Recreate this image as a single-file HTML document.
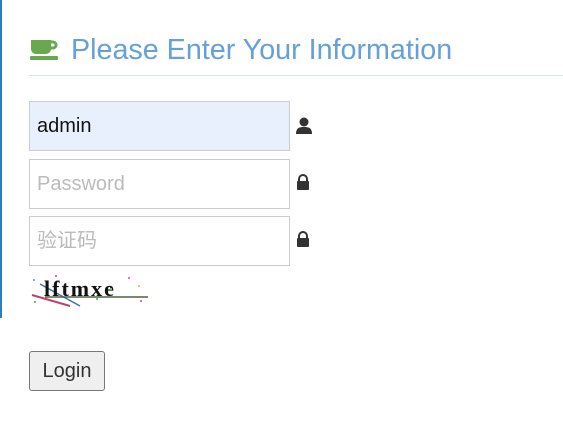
<!DOCTYPE html>
<html><head><style>
body{margin:0;width:563px;height:423px;background:#fff;position:relative;overflow:hidden;font-family:"Liberation Sans","Noto Sans CJK SC",sans-serif}
.bar{position:absolute;left:0;top:0;width:2px;height:318px;background:#2a7fc4}
h1{position:absolute;left:71px;top:34px;margin:0;font-weight:normal;font-size:28.7px;color:#66a0d8;white-space:nowrap}
.hr{position:absolute;left:29px;top:75px;width:534px;height:1px;background:#d6e4f0}
.in{position:absolute;left:29px;font-size:20px;line-height:48px;padding-left:7px;box-sizing:border-box;width:261px;height:50px;border:1px solid #ccc;color:#bbb}
.ic{position:absolute;left:296px}
.btn{position:absolute;left:29px;top:351px;width:76px;height:40px;box-sizing:border-box;border:1px solid #777;border-radius:3px;background:#efefef;font-size:20px;line-height:38px;text-align:center;color:#333}
</style></head><body>
<div class="bar"></div>
<svg style="position:absolute;left:30px;top:39px" width="30" height="24" viewBox="0 0 30 24"><path d="M1 1h20v9a5 5 0 0 1-5 5H6a5 5 0 0 1-5-5z" fill="#6aa84f"/><path d="M21 3h2a3 3 0 0 1 0 6h-2" fill="none" stroke="#6aa84f" stroke-width="3"/><rect x="0" y="17" width="28" height="4" rx="1" fill="#6aa84f"/></svg>
<h1>Please Enter Your Information</h1>
<div class="hr"></div>
<div class="in" style="top:101px;background:#e8f0fe;color:#111">admin</div>
<div class="in" style="top:159px">Password</div>
<div class="in" style="top:216px">验证码</div>
<svg class="ic" style="top:117px" width="16" height="18" viewBox="0 0 16 18"><circle cx="8" cy="5" r="4.5" fill="#333"/><path d="M0 17c0-6 3-7 8-7s8 1 8 7z" fill="#333"/></svg>
<svg class="ic" style="top:174px" width="14" height="16" viewBox="0 0 14 16"><path d="M3 7V5a4 4 0 0 1 8 0v2" fill="none" stroke="#333" stroke-width="2"/><rect x="1" y="7" width="12" height="9" rx="1" fill="#333"/></svg>
<svg class="ic" style="top:231px" width="14" height="16" viewBox="0 0 14 16"><path d="M3 7V5a4 4 0 0 1 8 0v2" fill="none" stroke="#333" stroke-width="2"/><rect x="1" y="7" width="12" height="9" rx="1" fill="#333"/></svg>
<svg style="position:absolute;left:30px;top:274px" width="120" height="34" viewBox="0 0 120 34"><path d="M2 21 L40 32" stroke="#c04070" stroke-width="2"/><path d="M10 10 L50 32" stroke="#4070b0" stroke-width="1.5"/><path d="M15 23 H118" stroke="#506040" stroke-width="1.5"/><text x="14" y="22" font-family="Liberation Serif,serif" font-weight="bold" font-size="22" letter-spacing="2" fill="#111">lftmxe</text><g fill="#8ad"><rect x="3" y="5" width="2" height="2"/><rect x="25" y="1" width="2" height="2" fill="#c6f"/><rect x="98" y="3" width="2" height="2" fill="#f6c"/><rect x="108" y="11" width="2" height="2" fill="#cc8"/><rect x="80" y="14" width="2" height="2" fill="#6c6"/><rect x="66" y="24" width="2" height="2" fill="#6c6"/><rect x="110" y="26" width="2" height="2" fill="#c6f"/><rect x="4" y="27" width="2" height="2" fill="#6c6"/></g></svg>
<div class="btn">Login</div>
</body></html>
